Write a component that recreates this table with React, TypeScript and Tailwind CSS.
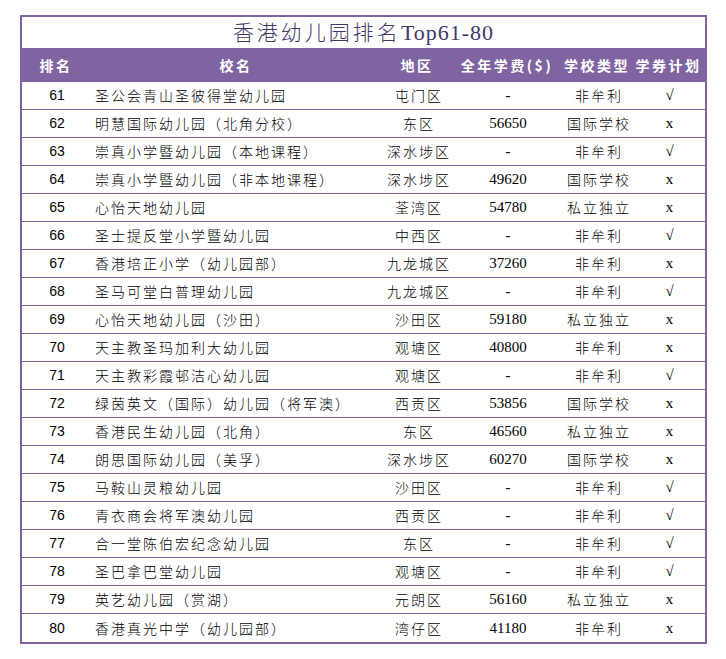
import React from "react";

type Row = [number, string, string, string, string, string];

const rows: Row[] = [
  [61, "圣公会青山圣彼得堂幼儿园", "屯门区", "-", "非牟利", "√"],
  [62, "明慧国际幼儿园（北角分校）", "东区", "56650", "国际学校", "x"],
  [63, "崇真小学暨幼儿园（本地课程）", "深水埗区", "-", "非牟利", "√"],
  [64, "崇真小学暨幼儿园（非本地课程）", "深水埗区", "49620", "国际学校", "x"],
  [65, "心怡天地幼儿园", "荃湾区", "54780", "私立独立", "x"],
  [66, "圣士提反堂小学暨幼儿园", "中西区", "-", "非牟利", "√"],
  [67, "香港培正小学（幼儿园部）", "九龙城区", "37260", "非牟利", "x"],
  [68, "圣马可堂白普理幼儿园", "九龙城区", "-", "非牟利", "√"],
  [69, "心怡天地幼儿园（沙田）", "沙田区", "59180", "私立独立", "x"],
  [70, "天主教圣玛加利大幼儿园", "观塘区", "40800", "非牟利", "x"],
  [71, "天主教彩霞邨洁心幼儿园", "观塘区", "-", "非牟利", "√"],
  [72, "绿茵英文（国际）幼儿园（将军澳）", "西贡区", "53856", "国际学校", "x"],
  [73, "香港民生幼儿园（北角）", "东区", "46560", "私立独立", "x"],
  [74, "朗思国际幼儿园（美孚）", "深水埗区", "60270", "国际学校", "x"],
  [75, "马鞍山灵粮幼儿园", "沙田区", "-", "非牟利", "√"],
  [76, "青衣商会将军澳幼儿园", "西贡区", "-", "非牟利", "√"],
  [77, "合一堂陈伯宏纪念幼儿园", "东区", "-", "非牟利", "√"],
  [78, "圣巴拿巴堂幼儿园", "观塘区", "-", "非牟利", "√"],
  [79, "英艺幼儿园（赏湖）", "元朗区", "56160", "私立独立", "x"],
  [80, "香港真光中学（幼儿园部）", "湾仔区", "41180", "非牟利", "x"],
];

const cjk = "font-['Noto_Sans_CJK_SC',sans-serif]";
const serif = "font-['Liberation_Serif','Noto_Sans_CJK_SC',serif]";
const grid = "grid grid-cols-[70px_290px_72px_108px_72px_71px]";

export default function App() {
  return (
    <div className="w-[726px] h-[659px] bg-white pt-[15px] pl-[20px]">
      <div className="w-[687px]">
        <div className="h-[33px] border-t-2 border-x-2 border-[#8064A2] flex items-center justify-center">
          <span className={`${serif} text-[22px] leading-none text-[#3f3868] tracking-[1px]`}>
            <span className={cjk + " tracking-[3px] text-[21px] font-light"}>香港幼儿园排名</span>Top61-80
          </span>
        </div>
        <div className={`${grid} h-[34px] bg-[#8064A2] text-white ${cjk} font-bold text-[14px] tracking-[2.5px] items-center text-center`}>
          <div className="pl-[2px]">排名</div>
          <div className="pl-[2px]">校名</div>
          <div className="pl-[2px]">地区</div>
          <div className="pl-[2px] whitespace-nowrap">全年学费($)</div>
          <div className="pl-[2px] whitespace-nowrap">学校类型</div>
          <div className="pl-[2px] whitespace-nowrap">学券计划</div>
        </div>
        <div className="border-x-2 border-b-2 border-[#8064A2]">
          {rows.map((r, i) => (
            <div
              key={r[0]}
              className={`${grid} h-[28px] items-center text-[14px] text-black ${
                i < rows.length - 1 ? "border-b border-[#8064A2]" : ""
              }`}
            >
              <div className="text-center font-['Liberation_Sans',sans-serif] text-[14px]">{r[0]}</div>
              <div className={`${cjk} font-light pl-[3px] tracking-[2px] whitespace-nowrap`}>{r[1]}</div>
              <div className={`${cjk} font-light text-center tracking-[2px] pl-[2px] whitespace-nowrap`}>{r[2]}</div>
              <div className={`${serif} text-center text-[15px]`}>{r[3]}</div>
              <div className={`${cjk} font-light text-center tracking-[2px] pl-[2px] whitespace-nowrap`}>{r[4]}</div>
              <div className={`${serif} text-center text-[15px]`}>{r[5]}</div>
            </div>
          ))}
        </div>
      </div>
    </div>
  );
}
